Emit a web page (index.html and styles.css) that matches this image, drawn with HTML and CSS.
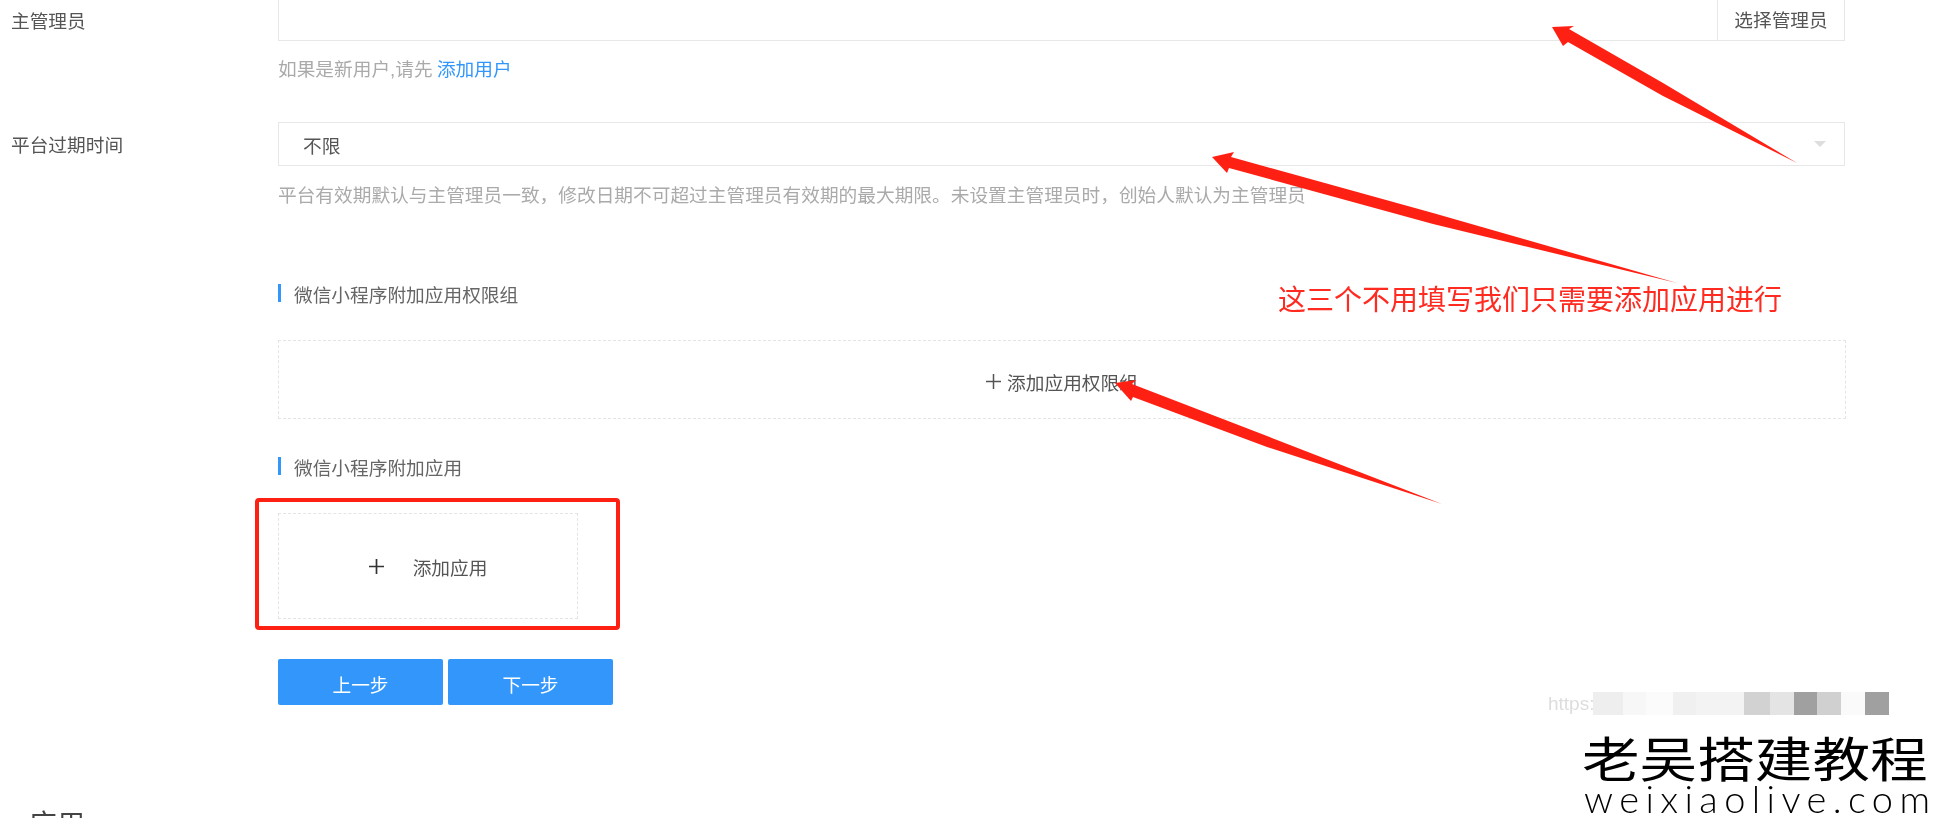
FILE: index.html
```html
<!DOCTYPE html>
<html lang="zh-CN">
<head>
<meta charset="utf-8">
<title>微信小程序附加应用</title>
<link rel="stylesheet" href="styles.css">
</head>
<body>
<main class="page">
  <form class="form">
    <div class="row row-admin">
      <label class="label">主管理员</label>
      <div class="control control-input">
        <div class="input-main"></div>
        <div class="input-addon">选择管理员</div>
      </div>
    </div>
    <p class="hint hint-admin">如果是新用户,请先 <a class="link">添加用户</a></p>

    <div class="row row-expire">
      <label class="label">平台过期时间</label>
      <div class="control control-select">
        <span class="select-value">不限</span>
        <svg class="caret" width="12" height="6" viewBox="0 0 12 6"><path d="M0 0h12L6 6z" fill="#dedede"/></svg>
      </div>
    </div>
    <p class="hint hint-expire">平台有效期默认与主管理员一致，修改日期不可超过主管理员有效期的最大期限。未设置主管理员时，创始人默认为主管理员</p>

    <h3 class="section section-group">微信小程序附加应用权限组</h3>
    <div class="dashed dashed-wide">
      <svg class="plus" width="15" height="15" viewBox="0 0 15 15"><path d="M7.5 0v15M0 7.5h15" stroke="#555" stroke-width="1.5" fill="none"/></svg>
      <span class="dashed-text">添加应用权限组</span>
    </div>

    <h3 class="section section-app">微信小程序附加应用</h3>
    <div class="dashed dashed-app">
      <svg class="plus" width="15" height="15" viewBox="0 0 15 15"><path d="M7.5 0v15M0 7.5h15" stroke="#333" stroke-width="1.7" fill="none"/></svg>
      <span class="dashed-text">添加应用</span>
    </div>

    <div class="actions">
      <button type="button" class="btn">上一步</button>
      <button type="button" class="btn">下一步</button>
    </div>
    <h2 class="next-title">应用</h2>
  </form>

  <svg class="annotations" width="1934" height="818" viewBox="0 0 1934 818">
    <g fill="#ff2014">
      <path d="M1552 27L1574 26L1569 29L1663 83L1797 163L1663 96L1568 42L1563 46Z"/>
      <path d="M1212 157L1234 152L1231 157L1433 213L1677 283L1433 224L1229 168L1227 173Z"/>
      <path d="M1115 383L1136 380L1132 384L1267 436L1442 504L1267 447L1133 397L1131 401Z"/>
    </g>
    <rect x="257" y="500" width="361" height="128" rx="2" fill="none" stroke="#ff2014" stroke-width="4"/>
  </svg>
  <p class="note">这三个不用填写我们只需要添加应用进行</p>

  <div class="mosaic">
    <span class="mosaic-text">https:</span>
    <i class="tile t1"></i><i class="tile t2"></i><i class="tile t3"></i><i class="tile t4"></i><i class="tile t5"></i><i class="tile t6"></i><i class="tile t7"></i><i class="tile t8"></i><i class="tile t9"></i><i class="tile t10"></i><i class="tile t11"></i>
  </div>
  <div class="brand">
    <div class="brand-name">老吴搭建教程</div>
    <div class="brand-url">weixiaolive.com</div>
  </div>
</main>
</body>
</html>
```

FILE: styles.css
```css
* { box-sizing: border-box; }
html, body { margin: 0; padding: 0; background: #fff; }
.page {
  position: relative;
  width: 1934px;
  height: 818px;
  overflow: hidden;
  font-family: "Liberation Sans", "Noto Sans CJK SC", sans-serif;
  font-size: 18.7px;
  color: #555;
  filter: blur(0.35px);
}
.form { padding: 0 89px 0 11px; display: flex; flex-direction: column; }
.row { display: flex; align-items: flex-start; }
.label { width: 267px; flex: none; color: #555; height: 44px; line-height: 48px; }
.row-admin .label { height: 41px; line-height: 43px; }
.control { flex: 1; border: 1px solid #e7e7e7; display: flex; }
.control-input { height: 41px; border-top: 0; }
.input-main { flex: 1; }
.input-addon { width: 127px; border-left: 1px solid #e7e7e7; text-align: center; line-height: 42px; color: #555; }
.row-expire { margin-top: 41px; }
.control-select { height: 44px; align-items: center; justify-content: space-between; padding: 0 18px 0 24px; }
.select-value { color: #555; }
.hint { margin: 0 0 0 267px; height: 24px; line-height: 26px; color: #aaa; }
.hint-admin { margin-top: 16px; word-spacing: -1px; }
.hint-expire { margin-top: 17px; }
.link { color: #3296fa; }
.section {
  margin: 0 0 0 267px;
  font-weight: 400;
  font-size: 18.7px;
  height: 18px;
  line-height: 24px;
  border-left: 3px solid #3296fa;
  padding-left: 13px;
  color: #666;
}
.section-group { margin-top: 77px; }
.section-app { margin-top: 38px; }
.dashed {
  margin-left: 267px;
  border: 1px dashed #e4e4e4;
  display: flex;
  align-items: center;
  justify-content: center;
}
.dashed-wide { margin: 38px -1px 0 267px; height: 79px; gap: 6px; padding-top: 4px; }
.dashed-app { margin-top: 38px; width: 300px; height: 106px; gap: 29px; }
.dashed-text { color: #555; }
.actions { margin: 40px 0 0 267px; display: flex; gap: 5px; }
.btn {
  width: 165px;
  height: 46px;
  border: 0;
  border-radius: 2px;
  background: #3296fa;
  color: #fff;
  font: inherit;
  padding: 2px 0 0;
}
.next-title { margin: 101px 0 0 18px; font-weight: 400; font-size: 28px; line-height: 40px; color: #444; }
.annotations { position: absolute; left: 0; top: 0; pointer-events: none; }
.note {
  position: absolute;
  left: 1278px;
  top: 283px;
  margin: 0;
  font-size: 28px;
  line-height: 36px;
  color: #ff2a20;
  white-space: nowrap;
}
.mosaic { position: absolute; left: 1548px; top: 692px; height: 23px; display: flex; }
.mosaic-text { width: 45px; font-size: 19px; line-height: 24px; color: #ddd; overflow: hidden; }
.tile { display: block; height: 23px; }
.t1 { width: 30px; background: #eee; }
.t2 { width: 23px; background: #f7f7f7; }
.t3 { width: 27px; background: #fbfbfb; }
.t4 { width: 23px; background: #f0f0f0; }
.t5 { width: 48px; background: #f3f3f3; }
.t6 { width: 26px; background: #d2d2d2; }
.t7 { width: 24px; background: #e4e4e4; }
.t8 { width: 23px; background: #a0a0a0; }
.t9 { width: 24px; background: #d0d0d0; }
.t10 { width: 24px; background: #fafafa; }
.t11 { width: 24px; background: #a0a0a0; }
.brand { position: absolute; left: 1582px; top: 729px; width: 352px; color: #000; }
.brand-name {
  font-family: "Noto Sans CJK SC", sans-serif;
  font-size: 48px;
  line-height: 54px;
  white-space: nowrap;
  transform: scaleX(1.2);
  transform-origin: left center;
}
.brand-url {
  margin-left: 2px;
  font-family: "Lato", sans-serif;
  font-weight: 300;
  font-size: 38px;
  line-height: 30px;
  letter-spacing: 6.4px;
  white-space: nowrap;
}
```
